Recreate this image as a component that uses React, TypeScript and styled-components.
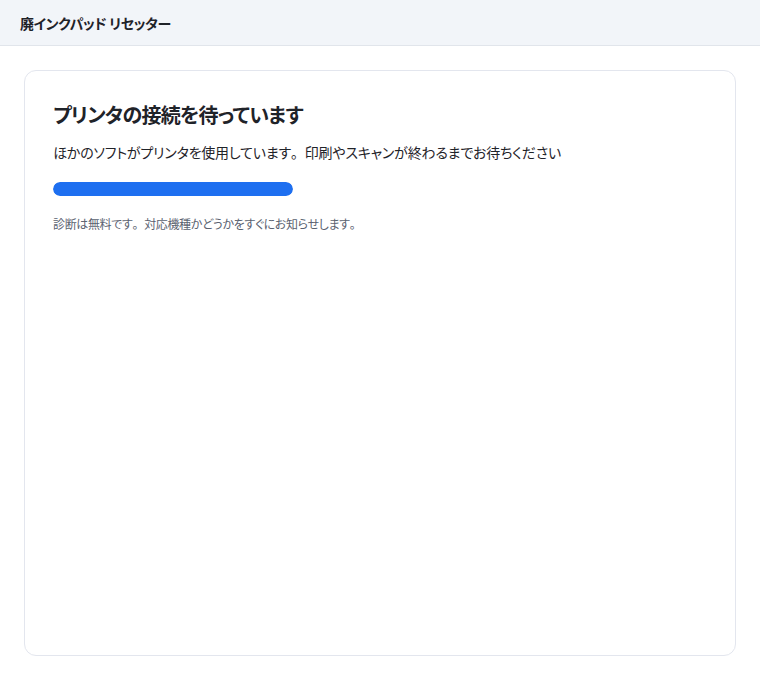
import React from 'react'
import styled, { createGlobalStyle } from 'styled-components'

const GlobalStyle = createGlobalStyle`
  html, body {
    margin: 0;
    padding: 0;
    height: 100%;
    background: #ffffff;
  }
  body {
    font-family: "Noto Sans CJK JP", "Noto Sans", sans-serif;
    font-feature-settings: "palt";
    color: #1f2329;
  }
  #root {
    height: 100%;
  }
`

const Page = styled.div`
  display: flex;
  flex-direction: column;
  height: 100vh;
  box-sizing: border-box;
`

const Header = styled.header`
  height: 45px;
  flex-shrink: 0;
  display: flex;
  align-items: center;
  padding: 0 20px;
  background: #f2f5f9;
  border-bottom: 1px solid #e1e5eb;
`

const AppTitle = styled.h1`
  margin: 0;
  font-size: 14px;
  font-weight: 700;
  letter-spacing: -0.4px;
  color: #1f2329;
`

const Main = styled.main`
  flex: 1;
  display: flex;
  padding: 24px;
  min-height: 0;
`

const Card = styled.section`
  flex: 1;
  border: 1px solid #e3e6ee;
  border-radius: 12px;
  padding: 30px 28px;
  background: #fff;
`

const Heading = styled.h2`
  margin: 0;
  font-size: 20px;
  line-height: 28px;
  font-weight: 700;
  letter-spacing: -0.7px;
  color: #1f2329;
`

const Message = styled.p`
  margin: 12px 0 0;
  font-size: 14px;
  line-height: 22px;
  letter-spacing: -0.2px;
  color: #1f2329;
`

// full-width ideographic period, as in the original
const Period = styled.span`
  font-feature-settings: normal;
`

const Track = styled.div<{ $width: number }>`
  margin-top: 19px;
  width: ${p => p.$width}px;
  height: 14px;
  border-radius: 7px;
  background: #e6ecf5;
  overflow: hidden;
`

const Fill = styled.div`
  height: 100%;
  border-radius: 7px;
  background: #1e6ff0;
`

const Note = styled.p`
  margin: 19px 0 0;
  font-size: 12px;
  line-height: 18px;
  letter-spacing: -0.35px;
  color: #5a6270;
`

export default function App() {
  const progress = 100
  return (
    <>
      <GlobalStyle />
      <Page>
        <Header>
          <AppTitle>廃インクパッド リセッター</AppTitle>
        </Header>
        <Main>
          <Card>
            <Heading>プリンタの接続を待っています</Heading>
            <Message>
              ほかのソフトがプリンタを使用しています<Period>。</Period>印刷やスキャンが終わるまでお待ちください
            </Message>
            <Track $width={240}>
              <Fill style={{ width: `${progress}%` }} />
            </Track>
            <Note>
              診断は無料です<Period>。</Period>対応機種かどうかをすぐにお知らせします<Period>。</Period>
            </Note>
          </Card>
        </Main>
      </Page>
    </>
  )
}
